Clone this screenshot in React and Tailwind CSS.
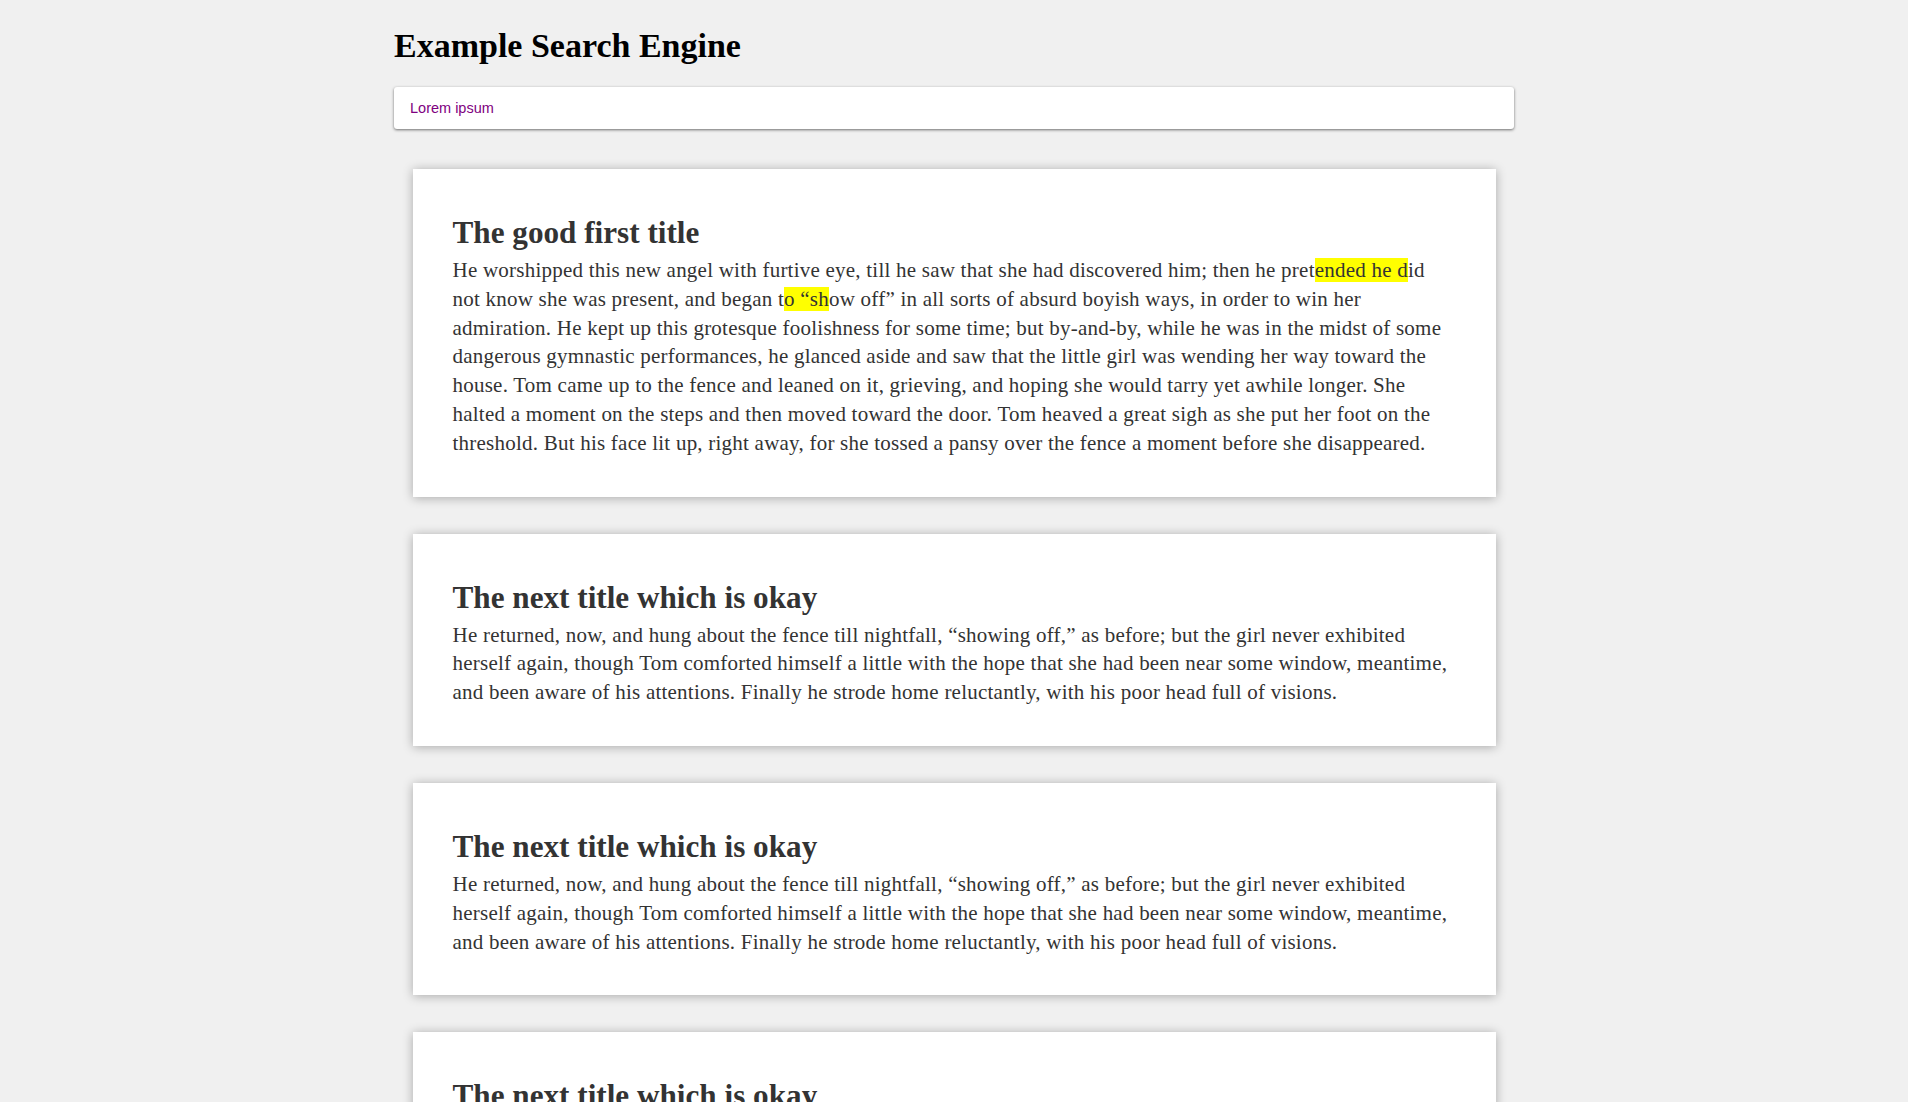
import React from 'react'

const results = [
  {
    title: 'The good first title',
    lines: [
      <>He worshipped this new angel with furtive eye, till he saw that she had discovered him; then he pret<mark className="bg-[#ffff00] text-[#333333]">ended he d</mark>id</>,
      <>not know she was present, and began t<mark className="bg-[#ffff00] text-[#333333]">o “sh</mark>ow off” in all sorts of absurd boyish ways, in order to win her</>,
      'admiration. He kept up this grotesque foolishness for some time; but by-and-by, while he was in the midst of some',
      'dangerous gymnastic performances, he glanced aside and saw that the little girl was wending her way toward the',
      'house. Tom came up to the fence and leaned on it, grieving, and hoping she would tarry yet awhile longer. She',
      'halted a moment on the steps and then moved toward the door. Tom heaved a great sigh as she put her foot on the',
      'threshold. But his face lit up, right away, for she tossed a pansy over the fence a moment before she disappeared.',
    ],
  },
  {
    title: 'The next title which is okay',
    lines: [
      'He returned, now, and hung about the fence till nightfall, “showing off,” as before; but the girl never exhibited',
      'herself again, though Tom comforted himself a little with the hope that she had been near some window, meantime,',
      'and been aware of his attentions. Finally he strode home reluctantly, with his poor head full of visions.',
    ],
  },
  {
    title: 'The next title which is okay',
    lines: [
      'He returned, now, and hung about the fence till nightfall, “showing off,” as before; but the girl never exhibited',
      'herself again, though Tom comforted himself a little with the hope that she had been near some window, meantime,',
      'and been aware of his attentions. Finally he strode home reluctantly, with his poor head full of visions.',
    ],
  },
  {
    title: 'The next title which is okay',
    lines: [
      'He returned, now, and hung about the fence till nightfall, “showing off,” as before; but the girl never exhibited',
      'herself again, though Tom comforted himself a little with the hope that she had been near some window, meantime,',
      'and been aware of his attentions. Finally he strode home reluctantly, with his poor head full of visions.',
    ],
  },
]

const ResultCard = ({ title, lines }) => {
  return (
    <div className="bg-white px-[40px] pt-[41px] pb-[39px] shadow-[0_1px_10px_rgba(0,0,0,0.3)] mb-[37px]">
      <h2 className="text-[31.2px] leading-[46px] font-bold text-[#333333]">{title}</h2>
      <p className="text-[21px] tracking-[0.23px] leading-[28.8px] text-[#333333] whitespace-nowrap">
        {lines.map((line, i) => (
          <React.Fragment key={i}>
            {line}
            {i < lines.length - 1 && <br />}
          </React.Fragment>
        ))}
      </p>
    </div>
  )
}

const App = () => {
  return (
    <div className="min-h-screen bg-[#f0f0f0] font-['Liberation_Serif',serif]">
      <div className="w-[1120px] mx-auto pt-[27px]">
        <h1 className="text-[34px] leading-[38px] font-bold text-black">Example Search Engine</h1>
        <input
          type="text"
          placeholder="Lorem ipsum"
          className="mt-[22px] block w-full h-[42px] rounded-[3px] bg-white px-[16px] text-[14.5px] font-['Liberation_Sans',sans-serif] text-[#800080] placeholder:text-[#800080] shadow-[0_1px_3px_rgba(0,0,0,0.55)] outline-none"
        />
        <div className="w-[1083px] mx-auto mt-[40px]">
          {results.map((r, i) => (
            <ResultCard key={i} title={r.title} lines={r.lines} />
          ))}
        </div>
      </div>
    </div>
  )
}

export default App
